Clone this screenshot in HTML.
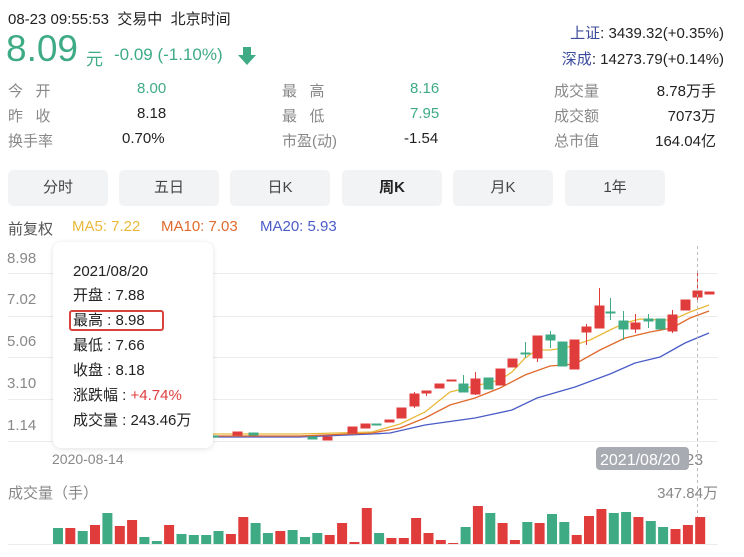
<!DOCTYPE html>
<html><head><meta charset="utf-8"><style>
*{margin:0;padding:0;box-sizing:border-box}
body{width:744px;height:557px;background:#fff;font-family:"Liberation Sans","Noto Sans CJK SC",sans-serif;color:#222;position:relative;overflow:hidden}
.a{position:absolute;white-space:nowrap}
.g{color:#3fab85}.gr{color:#888}
.tab{position:absolute;top:170px;height:36px;width:100px;background:#f2f3f5;border-radius:5px;text-align:center;line-height:36px;font-size:15px;color:#444}
</style></head><body>
<div class="a" style="left:8px;top:8px;font-size:15px">08-23 09:55:53&nbsp; 交易中&nbsp; 北京时间</div>
<div class="a g" style="left:6px;top:29px;font-size:37px;line-height:40px">8.09</div>
<div class="a g" style="left:86px;top:45px;font-size:17px">元</div>
<div class="a g" style="left:114px;top:45px;font-size:17px">-0.09 (-1.10%)</div>
<svg class="a" style="left:237px;top:46px" width="20" height="20"><path d="M6 1h8v8h5l-9 10-9-10h5z" fill="#3fab85"/></svg>
<div class="a" style="right:20px;top:22px;font-size:15px"><span style="color:#3a4a9a">上证</span>: 3439.32(+0.35%)</div>
<div class="a" style="right:20px;top:48px;font-size:15px"><span style="color:#3a4a9a">深成</span>: 14273.79(+0.14%)</div>

<div class="a gr" style="left:8px;top:80px;font-size:15px">今&nbsp;&nbsp;&nbsp;开</div>
<div class="a g" style="left:137px;top:80px;font-size:15px">8.00</div>
<div class="a gr" style="left:8px;top:105px;font-size:15px">昨&nbsp;&nbsp;&nbsp;收</div>
<div class="a" style="left:137px;top:105px;font-size:15px">8.18</div>
<div class="a gr" style="left:8px;top:130px;font-size:15px">换手率</div>
<div class="a" style="left:122px;top:130px;font-size:15px">0.70%</div>

<div class="a gr" style="left:282px;top:80px;font-size:15px">最&nbsp;&nbsp;&nbsp;高</div>
<div class="a g" style="left:410px;top:80px;font-size:15px">8.16</div>
<div class="a gr" style="left:282px;top:105px;font-size:15px">最&nbsp;&nbsp;&nbsp;低</div>
<div class="a g" style="left:410px;top:105px;font-size:15px">7.95</div>
<div class="a gr" style="left:282px;top:130px;font-size:15px">市盈(动)</div>
<div class="a" style="left:404px;top:130px;font-size:15px">-1.54</div>

<div class="a gr" style="left:554px;top:80px;font-size:15px">成交量</div>
<div class="a" style="right:28px;top:80px;font-size:15px">8.78万手</div>
<div class="a gr" style="left:554px;top:105px;font-size:15px">成交额</div>
<div class="a" style="right:28px;top:105px;font-size:15px">7073万</div>
<div class="a gr" style="left:554px;top:130px;font-size:15px">总市值</div>
<div class="a" style="right:28px;top:130px;font-size:15px">164.04亿</div>

<div class="tab" style="left:8px">分时</div>
<div class="tab" style="left:119px">五日</div>
<div class="tab" style="left:230px">日K</div>
<div class="tab" style="left:342px;font-weight:bold;color:#222">周K</div>
<div class="tab" style="left:453px">月K</div>
<div class="tab" style="left:565px">1年</div>

<div class="a" style="left:8px;top:218px;font-size:15px;color:#555">前复权</div>
<div class="a" style="left:72px;top:218px;font-size:15px;color:#e8b93a">MA5: 7.22</div>
<div class="a" style="left:161px;top:218px;font-size:15px;color:#e06a2c">MA10: 7.03</div>
<div class="a" style="left:260px;top:218px;font-size:15px;color:#4a5cc8">MA20: 5.93</div>

<div class="a gr" style="left:7px;top:250px;font-size:15px">8.98</div>
<div class="a gr" style="left:7px;top:291px;font-size:15px">7.02</div>
<div class="a gr" style="left:7px;top:333px;font-size:15px">5.06</div>
<div class="a gr" style="left:7px;top:375px;font-size:15px">3.10</div>
<div class="a gr" style="left:7px;top:417px;font-size:15px">1.14</div>

<svg class="a" style="left:0;top:0" width="744" height="557">
<g stroke="#ececec" stroke-width="1">
<line x1="8" y1="273.5" x2="718" y2="273.5"/><line x1="8" y1="316.5" x2="718" y2="316.5"/><line x1="8" y1="357.5" x2="718" y2="357.5"/><line x1="8" y1="399.5" x2="718" y2="399.5"/><line x1="8" y1="441.5" x2="718" y2="441.5"/>
<line x1="8" y1="544.5" x2="718" y2="544.5"/>
</g>
<g fill="none" stroke-width="1.3">
<polyline stroke="#4a5cc8" points="213,437 300,437 372,434 390,433 425,425 475,418 512,410 537,398 575,387 610,374 635,363 660,357 685,343 709,333"/>
<polyline stroke="#e06a2c" points="213,436 300,436 372,433 400,428 425,418 450,405 475,398 500,388 525,375 550,366 575,364 600,350 625,338 650,332 672,328 690,318 709,311"/>
<polyline stroke="#e8b93a" points="213,434 300,434 372,432 400,424 425,412 450,392 475,386 500,380 512,372 525,358 537,350 550,350 565,348 590,340 610,330 625,323 640,319 660,320 672,320 690,312 709,305"/>
</g>
<g stroke-width="1">
<g fill="#e03c3c" stroke="#e03c3c">
<rect x="233" y="432" width="9" height="3"/><rect x="323" y="437" width="9" height="3"/>
<rect x="348" y="427" width="9" height="6"/><rect x="361" y="424" width="9" height="4"/>
<rect x="385" y="420" width="9" height="2"/>
<rect x="397" y="408" width="9" height="10"/>
<rect x="410" y="394" width="9" height="12"/><line x1="414.5" y1="392" x2="414.5" y2="408"/>
<rect x="422" y="391" width="9" height="2"/><line x1="426.5" y1="391" x2="426.5" y2="396"/>
<rect x="435" y="384" width="9" height="4"/>
<rect x="447" y="380" width="9" height="1"/>
<rect x="471" y="379" width="9" height="15"/><line x1="475.5" y1="372" x2="475.5" y2="395"/>
<rect x="496" y="369" width="9" height="16"/>
<rect x="508" y="359" width="9" height="8"/>
<rect x="533" y="336" width="9" height="22"/><line x1="537.5" y1="336" x2="537.5" y2="362"/>
<rect x="570" y="340" width="9" height="29"/>
<rect x="582" y="327" width="9" height="5"/><line x1="586.5" y1="324" x2="586.5" y2="345"/>
<rect x="595" y="306" width="9" height="22"/><line x1="599.5" y1="288" x2="599.5" y2="328"/>
<rect x="631" y="323" width="9" height="6"/><line x1="635.5" y1="314" x2="635.5" y2="333"/>
<rect x="668" y="315" width="9" height="16"/><line x1="672.5" y1="310" x2="672.5" y2="333"/>
<rect x="681" y="300" width="9" height="10"/>
<rect x="693" y="291" width="9" height="6"/><line x1="697.5" y1="272" x2="697.5" y2="302"/>
<rect x="705" y="292" width="9" height="2"/>
</g>
<g fill="#3fab85" stroke="#3fab85">
<rect x="209" y="436" width="9" height="1"/><rect x="249" y="433" width="9" height="2"/><rect x="308" y="437" width="9" height="2"/>
<rect x="372" y="424" width="9" height="1"/>
<rect x="459" y="384" width="9" height="8"/><line x1="463.5" y1="375" x2="463.5" y2="392"/>
<rect x="484" y="378" width="9" height="11"/>
<rect x="521" y="353" width="9" height="1"/><line x1="525.5" y1="342" x2="525.5" y2="358"/>
<rect x="546" y="335" width="9" height="5"/><line x1="550.5" y1="331" x2="550.5" y2="348"/>
<rect x="558" y="342" width="9" height="24"/>
<rect x="606" y="312" width="9" height="1"/><line x1="610.5" y1="298" x2="610.5" y2="320"/>
<rect x="619" y="321" width="9" height="8"/><line x1="623.5" y1="311" x2="623.5" y2="340"/>
<rect x="644" y="319" width="9" height="2"/><line x1="648.5" y1="314" x2="648.5" y2="328"/>
<rect x="656" y="319" width="9" height="10"/>
</g>
</g>
<line x1="697.5" y1="246" x2="697.5" y2="544" stroke="#bbb" stroke-dasharray="3,3"/>
<g id="vol"></g>
<text x="600" y="465" font-size="16" fill="#888" font-family="Liberation Sans">2021/08/20-23</text>
<rect x="596" y="447" width="93" height="23" rx="4" fill="#a9abb3"/>
<text x="600" y="465" font-size="16" fill="#fff" font-family="Liberation Sans">2021/08/20</text>
</svg>
<div class="a gr" style="left:52px;top:451px;font-size:14px">2020-08-14</div>
<div class="a gr" style="left:8px;top:482px;font-size:15px">成交量（手）</div>
<div class="a gr" style="right:26px;top:482px;font-size:15px">347.84万</div>

<div class="a" style="left:53px;top:242px;width:160px;height:206px;background:#fff;border-radius:8px;box-shadow:0 1px 6px rgba(0,0,0,.12);font-size:15px;color:#222;padding:17px 0 0 20px;line-height:25px">
<div style="margin-bottom:-1px">2021/08/20</div>
<div>开盘 : 7.88</div>
<div style="position:relative">最高 : 8.98<span style="position:absolute;left:-4px;top:2px;width:95px;height:21px;border:2px solid #d8433b;border-radius:3px"></span></div>
<div>最低 : 7.66</div>
<div>收盘 : 8.18</div>
<div>涨跌幅 : <span style="color:#e03c3c">+4.74%</span></div>
<div>成交量 : 243.46万</div>
</div>
<script>
var h=[['g',528],['r',528],['g',531],['r',525],['g',513],['r',526],['r',520],['g',537],['g',541],['r',525],['g',534],['g',535],['g',535],['g',531],['r',534],['r',517],['g',523],['g',533],['r',531],['g',530],['g',537],['g',533],['r',535],['r',523],['r',542],['r',508],
['g',533],['r',538],['r',538],['r',518],['r',533],['r',540],['r',543],['g',527],['r',506],['g',513],['r',523],['r',540],['g',522],['r',523],['g',514],['g',522],['r',535],['r',516],['r',509],['g',513],['g',512],['r',517],['g',521],['g',527],['r',529],['r',525],['r',517]];
var s='';
for(var i=0;i<h.length;i++){var x=53+i*12.35;var c=h[i][0]=='g'?'#3fab85':'#e03c3c';s+='<rect x="'+x.toFixed(1)+'" y="'+h[i][1]+'" width="10" height="'+(544-h[i][1])+'" fill="'+c+'"/>';}
document.getElementById('vol').innerHTML=s;
</script>
</body></html>
